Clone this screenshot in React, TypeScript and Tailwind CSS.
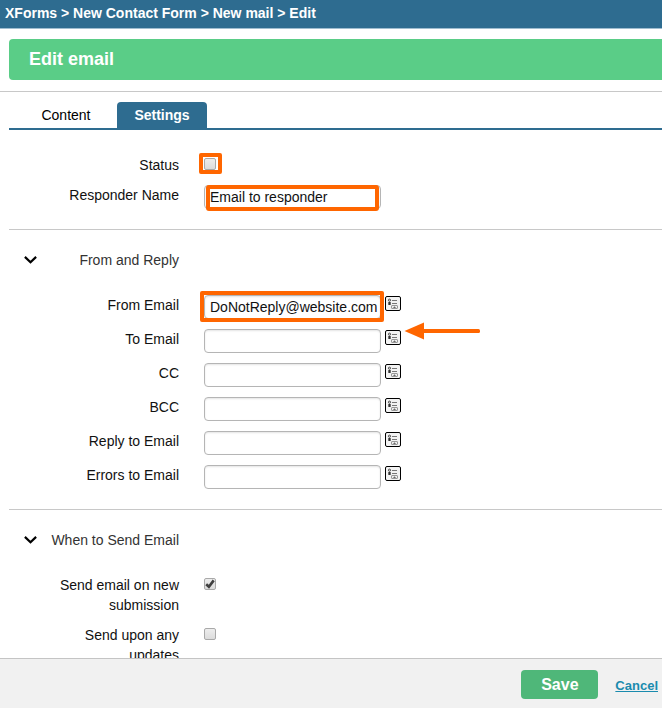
import React from 'react'

const emailFields = [
    { id: 'from-email', label: 'From Email', value: 'DoNotReply@website.com', highlighted: true },
    { id: 'to-email', label: 'To Email', value: '', arrow: true },
    { id: 'cc', label: 'CC', value: '' },
    { id: 'bcc', label: 'BCC', value: '' },
    { id: 'reply-to', label: 'Reply to Email', value: '' },
    { id: 'errors-to', label: 'Errors to Email', value: '' },
]

const sendOptions = [
    { id: 'on-new', label: 'Send email on new submission', checked: true },
    { id: 'on-update', label: 'Send upon any updates', checked: false },
]

const Label = ({ htmlFor, children }: { htmlFor: string; children: React.ReactNode }) => (
    <label htmlFor={htmlFor} className="ml-10 w-[130px] shrink-0 text-right">
        {children}
    </label>
)

const TextInput = ({ id, value }: { id: string; value: string }) => (
    <input
        id={id}
        type="text"
        defaultValue={value}
        className="block h-6 w-[177px] rounded border border-[#b5b5b5] bg-white pl-[5px] text-sm text-[#111] shadow-[inset_0_1px_2px_#e4e4e4] outline-none"
    />
)

const Checkbox = ({ id, checked }: { id: string; checked?: boolean }) => (
    <span className="relative mt-[3px] block size-3">
        <input
            id={id}
            type="checkbox"
            defaultChecked={checked}
            className="peer block size-3 appearance-none rounded-[2px] border border-[#a9a9a9] bg-linear-to-b from-[#ededed] to-[#dcdcdc]"
        />
        <svg
            viewBox="0 0 12 12"
            className="pointer-events-none absolute inset-0 hidden size-3 peer-checked:block"
            fill="none"
            stroke="#404040"
            strokeWidth="2.6"
        >
            <path d="M2.2 6.2 L4.9 8.7 L9.7 2.4" />
        </svg>
    </span>
)

const PickerButton = ({ label }: { label: string }) => (
    <button type="button" aria-label={label} className="mt-px ml-1 block h-[15px] w-4">
        <svg viewBox="0 0 16 15" className="block h-[15px] w-4">
            <rect x="0.5" y="0.5" width="15" height="14" rx="1.5" fill="#f3f3f3" stroke="#000" />
            <circle cx="4.5" cy="4.2" r="1.1" fill="#ddd" stroke="#444" strokeWidth="0.9" />
            <rect x="3.3" y="6" width="2.4" height="3" rx="0.6" fill="#333" />
            <path d="M7 4.5h5M7 7.5h5" stroke="#777" />
            <rect x="6.5" y="9.5" width="6" height="3" rx="0.5" fill="#eee" stroke="#999" />
            <path d="M8 12l1.5-1.8L11 12z" fill="#666" />
        </svg>
    </button>
)

const SectionHeading = ({ children }: { children: React.ReactNode }) => (
    <div className="mb-[25px] flex h-5 w-[170px] items-center justify-between pl-[15px] text-[#333]">
        <svg viewBox="0 0 13 8" className="h-2 w-[13px] shrink-0" fill="none" stroke="#000" strokeWidth="2.2">
            <path d="M0.9 0.9 L6.5 6.3 L12.1 0.9" />
        </svg>
        <h2 className="whitespace-nowrap">{children}</h2>
    </div>
)

const App = () => {
    return (
        <div className="flex h-screen flex-col overflow-hidden bg-white font-['Liberation_Sans',Arial,sans-serif] text-sm leading-5 text-[#111]">
            <header className="h-[29px] shrink-0 border-b border-[#9fbdd0] bg-[#2e6c90] pl-[5px]">
                <nav className="text-sm leading-[26px] font-bold whitespace-nowrap text-white">
                    XForms &gt; New Contact Form &gt; New mail &gt; Edit
                </nav>
            </header>

            <div className="shrink-0 border-b border-[#c8c8c8] pt-2.5 pb-[11px] pl-[9px]">
                <h1 className="h-[41px] rounded-l-[4px] bg-[#5acd87] pl-5 text-lg leading-10 font-bold text-white">Edit email</h1>
            </div>

            <main className="min-h-0 flex-1 overflow-y-auto pt-2.5 pl-[9px] [scrollbar-width:none]">
                <div role="tablist" className="flex h-7 border-b-2 border-[#2e6c90]">
                    <button type="button" role="tab" aria-selected="false" className="w-[108px] pl-1.5 text-black">
                        Content
                    </button>
                    <button type="button" role="tab" aria-selected="true" className="w-[90px] rounded-t-[4px] bg-[#2e6c90] font-bold text-white">
                        Settings
                    </button>
                </div>

                <section className="flex flex-col gap-2.5 border-b border-[#c8c8c8] pt-[25px] pb-5">
                    <div className="flex gap-[25px]">
                        <Label htmlFor="status">Status</Label>
                        <div className="relative">
                            <Checkbox id="status" />
                            <span className="pointer-events-none absolute -top-0.5 -left-[5px] h-[21px] w-[23px] rounded-[2px] border-4 border-[#ff6600]" />
                        </div>
                    </div>
                    <div className="flex gap-[25px]">
                        <Label htmlFor="responder-name">Responder Name</Label>
                        <div className="relative">
                            <TextInput id="responder-name" value="Email to responder" />
                            <span className="pointer-events-none absolute top-0 left-0.5 h-[26px] w-[173px] rounded-[3px] border-4 border-[#ff6600]" />
                        </div>
                    </div>
                </section>

                <section className="border-b border-[#c8c8c8] py-5">
                    <SectionHeading>From and Reply</SectionHeading>
                    <div className="flex flex-col gap-2.5">
                        {emailFields.map((field) => (
                            <div key={field.id} className="flex gap-[25px]">
                                <Label htmlFor={field.id}>{field.label}</Label>
                                <div className="relative flex items-start">
                                    <TextInput id={field.id} value={field.value} />
                                    <PickerButton label={`Choose ${field.label}`} />
                                    {field.highlighted && (
                                        <span className="pointer-events-none absolute -top-1 -left-1 h-[31px] w-[184px] rounded-[2px] border-4 border-[#ff6600]" />
                                    )}
                                    {field.arrow && (
                                        <svg viewBox="0 0 76 18" className="absolute -top-[7px] left-[200px] h-[18px] w-[76px]" fill="#ff6600">
                                            <path d="M0.5 9 L20 0.5 V17.5 Z" />
                                            <rect x="18" y="7" width="58" height="4" rx="1.5" />
                                        </svg>
                                    )}
                                </div>
                            </div>
                        ))}
                    </div>
                </section>

                <section className="py-5">
                    <SectionHeading>When to Send Email</SectionHeading>
                    <div className="flex flex-col gap-2.5">
                        {sendOptions.map((option) => (
                            <div key={option.id} className="flex gap-[25px]">
                                <Label htmlFor={option.id}>{option.label}</Label>
                                <Checkbox id={option.id} checked={option.checked} />
                            </div>
                        ))}
                    </div>
                </section>
            </main>

            <footer className="flex h-[50px] shrink-0 items-baseline justify-end gap-[17px] border-t border-[#c4c4c4] bg-[#f1f1f1] pt-[11px] pr-1">
                <button type="button" className="h-[29px] w-[77px] rounded-[4px] bg-[#4fb779] text-base font-bold text-white">
                    Save
                </button>
                <a href="#cancel" className="text-[13px] font-bold text-[#1a8bae] underline">
                    Cancel
                </a>
            </footer>
        </div>
    )
}

export default App
